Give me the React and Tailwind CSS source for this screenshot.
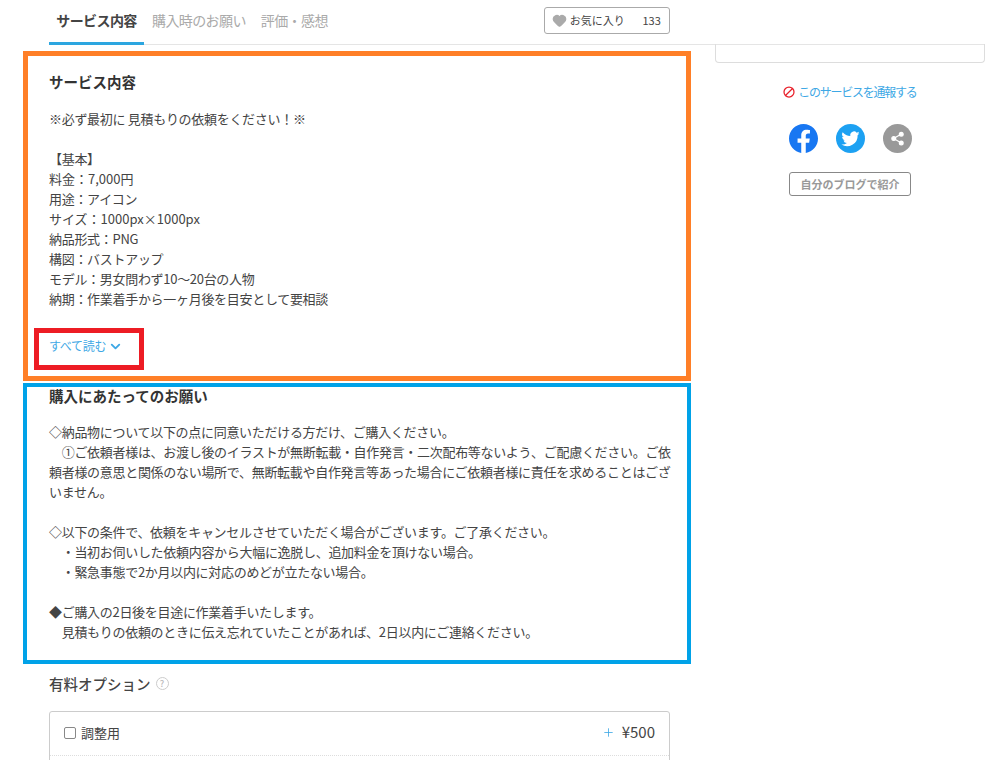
import { Heart, ChevronDown, Ban, Share2, Plus } from 'lucide-react';

const FONT = { fontFamily: '"Noto Sans CJK JP", "Noto Sans", sans-serif' };

const basicLines = [
  { text: '料金：7,000円', wide: true },
  { text: '用途：アイコン' },
  { text: 'サイズ：1000px×1000px', wide: true },
  { text: '納品形式：PNG' },
  { text: '構図：バストアップ' },
  { text: 'モデル：男女問わず10～20台の人物' },
  { text: '納期：作業着手から一ヶ月後を目安として要相談' },
];

function Tabs() {
  return (
    <div className="flex h-[45px] w-[936px] border-b border-[#e5e5e5] ml-[49px]">
      <div className="w-[95px] h-[45px] border-b-[3px] border-[#2ca6e0] text-[14px] font-semibold tracking-[-0.6px] text-[#444] text-center leading-[41px]">サービス内容</div>
      <div className="ml-[8px] text-[14px] tracking-[-0.6px] text-[#aaa] leading-[41px]">購入時のお願い</div>
      <div className="ml-[15px] text-[14px] tracking-[-0.6px] text-[#aaa] leading-[41px]">評価・感想</div>
      <div className="ml-[216px] mt-[7px] w-[126px] h-[27px] border border-[#aaa] rounded-[3px] flex items-center pl-[7px] pr-[8px] text-[11px] text-[#444]">
        <Heart size={15} className="text-[#aaa] fill-[#aaa] mr-[3px]" />
        <span>お気に入り</span>
        <span className="ml-auto">133</span>
      </div>
    </div>
  );
}

function ServiceBox() {
  return (
    <div className="mt-[6px] ml-[23px] w-[668px] h-[330px] border-[5px] border-[#ff7f27] relative pl-[21px] pt-[16px] text-[13px] leading-[20px] tracking-[-0.3px] text-[#444]">
      <h2 className="text-[14.5px] font-semibold tracking-normal leading-[20px] text-[#333]">サービス内容</h2>
      <p className="mt-[17px]">※必ず最初に 見積もりの依頼をください！※</p>
      <p className="mt-[20px]">【基本】</p>
      {basicLines.map(line => (
        <p key={line.text} className={line.wide ? 'tracking-normal' : ''}>{line.text}</p>
      ))}
      {/* red annotation around the read-more link */}
      <div className="absolute left-[6px] top-[272px] w-[110px] h-[42px] border-[5px] border-[#ed1c24] flex items-center pl-[10px] pb-[6px] text-[12px] text-[#3ea8e5]">
        すべて読む
        <ChevronDown size={15} strokeWidth={3} className="ml-[2px]" />
      </div>
    </div>
  );
}

function RequestBox() {
  return (
    <div className="mt-[2px] ml-[23px] w-[668px] h-[281px] border-[4px] border-[#00a2e8] pl-[22px] text-[13px] leading-[20px] tracking-[-0.3px] text-[#444]">
      <h2 className="-mt-[1px] text-[14.5px] font-semibold tracking-normal leading-[20px] text-[#333]">購入にあたってのお願い</h2>
      <div className="mt-[16px] w-[625px]">
        <p>◇納品物について以下の点に同意いただける方だけ、ご購入ください。</p>
        <p>　①ご依頼者様は、お渡し後のイラストが無断転載・自作発言・二次配布等ないよう、ご配慮ください。ご依頼者様の意思と関係のない場所で、無断転載や自作発言等あった場合にご依頼者様に責任を求めることはございません。</p>
        <p className="mt-[20px]">◇以下の条件で、依頼をキャンセルさせていただく場合がございます。ご了承ください。</p>
        <p>　・当初お伺いした依頼内容から大幅に逸脱し、追加料金を頂けない場合。</p>
        <p>　・緊急事態で2か月以内に対応のめどが立たない場合。</p>
        <p className="mt-[20px]">◆ご購入の2日後を目途に作業着手いたします。</p>
        <p>　見積もりの依頼のときに伝え忘れていたことがあれば、2日以内にご連絡ください。</p>
      </div>
    </div>
  );
}

function Options() {
  return (
    <div className="ml-[49px] w-[621px]">
      <div className="mt-[10px] flex items-center text-[14.5px] font-medium leading-[20px] text-[#444]">
        有料オプション
        <span className="ml-[5px] -mt-[2px] w-[13px] h-[13px] rounded-full border border-[#ccc] text-[9px] leading-[11px] text-center text-[#bbb]">?</span>
      </div>
      <div className="mt-[17px] border border-[#ccc] rounded-[3px] h-[80px]">
        <div className="h-[44px] border-b border-dotted border-[#ddd] flex items-center pl-[14px] pr-[14px] pb-[2px] text-[13px] text-[#444]">
          <span className="w-[12px] h-[12px] border border-[#888] rounded-[2px] bg-white mr-[5px]" />
          調整用
          <Plus size={13} strokeWidth={1.5} className="ml-auto text-[#3ea8e5] mr-[7px]" />
          <span className="text-[15px]">¥500</span>
        </div>
      </div>
    </div>
  );
}

function Sidebar() {
  return (
    <div className="absolute left-[715px] top-[44px] w-[270px] flex flex-col items-center">
      <div className="w-full h-[19px] border border-t-0 border-[#ddd] rounded-b-[4px]" />
      <div className="mt-[21px] flex items-center text-[12px] leading-[16px] tracking-[-1.25px] text-[#3ea8e5]">
        <Ban size={12} strokeWidth={2.5} className="text-[#e8202a] mr-[3px] -scale-x-100" />
        このサービスを通報する
      </div>
      <div className="mt-[24px] flex gap-[18px]">
        <svg width="29" height="29" viewBox="0 0 24 24">
          <path fill="#1877f2" d="M24 12.07C24 5.4 18.63 0 12 0S0 5.4 0 12.07c0 6.03 4.39 11.02 10.13 11.93v-8.44H7.08v-3.49h3.05V9.41c0-3.02 1.79-4.69 4.53-4.69 1.31 0 2.68.24 2.68.24v2.97h-1.51c-1.49 0-1.96.93-1.96 1.88v2.26h3.33l-.53 3.49h-2.8V24C19.61 23.09 24 18.1 24 12.07z" />
        </svg>
        <svg width="29" height="29" viewBox="0 0 24 24">
          <circle cx="12" cy="12" r="12" fill="#1da1f2" />
          <path fill="#fff" d="M19.5 7.6c-.55.25-1.14.41-1.77.49.64-.38 1.12-.98 1.35-1.7-.6.35-1.26.61-1.96.75a3.08 3.08 0 0 0-5.25 2.81 8.74 8.74 0 0 1-6.35-3.22 3.08 3.08 0 0 0 .95 4.11c-.5-.02-.98-.15-1.39-.38v.04c0 1.49 1.06 2.74 2.47 3.02-.45.12-.93.14-1.39.05a3.08 3.08 0 0 0 2.87 2.14 6.18 6.18 0 0 1-4.55 1.27 8.71 8.71 0 0 0 13.41-7.74c.6-.43 1.12-.97 1.53-1.58z" />
        </svg>
        <div className="w-[29px] h-[29px] rounded-full bg-[#999] flex items-center justify-center">
          <Share2 size={15} className="text-white fill-white" />
        </div>
      </div>
      <div className="mt-[19px] w-[122px] h-[24px] border border-[#888] rounded-[3px] text-[11px] font-semibold leading-[22px] text-center text-[#999]">自分のブログで紹介</div>
    </div>
  );
}

export default function App() {
  return (
    <div className="relative w-[1000px] h-[760px] overflow-hidden bg-white" style={FONT}>
      <Tabs />
      <ServiceBox />
      <RequestBox />
      <Options />
      <Sidebar />
    </div>
  );
}
